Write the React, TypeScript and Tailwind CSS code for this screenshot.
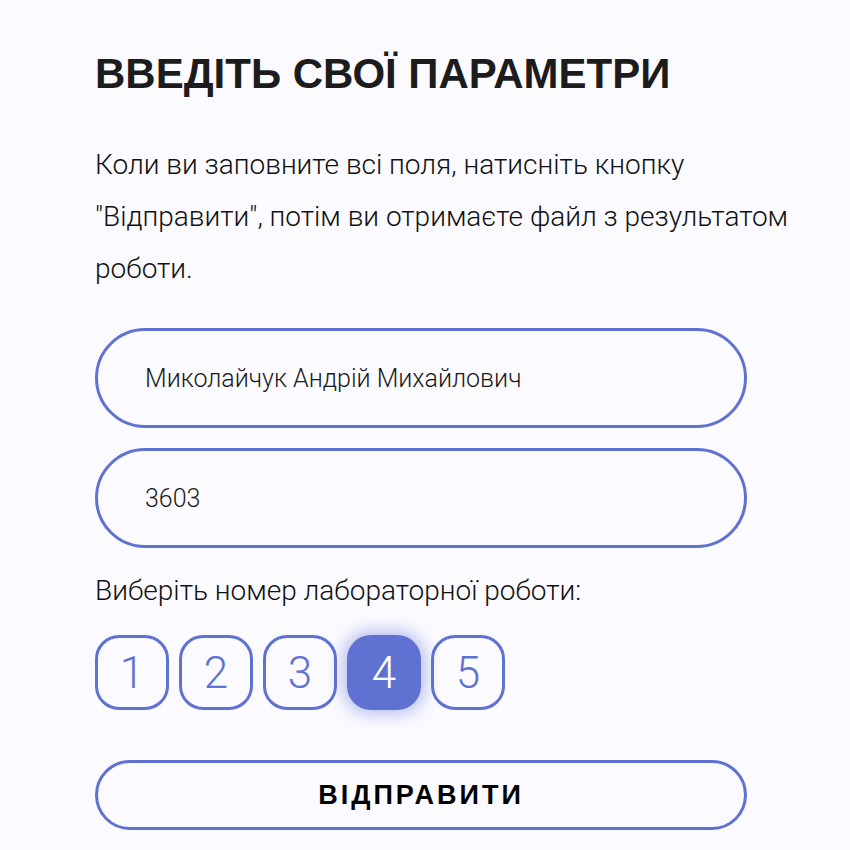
import { useState } from 'react';

export default function App() {
  const [selected, setSelected] = useState(4);
  const labs = [1, 2, 3, 4, 5];

  return (
    <div className="min-h-[850px] w-full bg-[#fafaff] font-['Roboto',sans-serif] text-[#1a1a1a]">
      <div className="pt-[50px] pl-[95px]">
        <h1 className="text-[42px] leading-[48px] font-bold text-[#1c1c1c] font-['Liberation_Sans',Arial,sans-serif]">
          ВВЕДІТЬ СВОЇ ПАРАМЕТРИ
        </h1>

        <p className="mt-[41px] w-[710px] text-[28px] font-light leading-[52px] text-[#111]">
          Коли ви заповните всі поля, натисніть кнопку "Відправити", потім ви отримаєте файл з результатом роботи.
        </p>

        <div className="w-[652px]">
          <div className="mt-[33px] flex flex-col gap-[20px]">
            <input
              defaultValue="Миколайчук Андрій Михайлович"
              className="h-[100px] w-full rounded-full border-[3px] border-[#5f72d2] bg-transparent pl-[47px] text-[25px] font-light text-[#1a1a1a] outline-none"
            />
            <input
              defaultValue="3603"
              className="h-[100px] w-full rounded-full border-[3px] border-[#5f72d2] bg-transparent pl-[47px] text-[25px] font-light text-[#1a1a1a] outline-none"
            />
          </div>

          <div className="mt-[28px] text-[28px] font-light leading-[30px] text-[#111]">
            Виберіть номер лабораторної роботи:
          </div>

          <div className="mt-[29px] flex gap-[10px]">
            {labs.map((n) =>
              n === selected ? (
                <button
                  key={n}
                  onClick={() => setSelected(n)}
                  className="flex h-[75px] w-[74px] items-center justify-center rounded-[24px] bg-[#5f72d2] text-[44px] font-light text-white shadow-[0_0_16px_4px_rgba(95,114,210,0.45)]"
                >
                  {n}
                </button>
              ) : (
                <button
                  key={n}
                  onClick={() => setSelected(n)}
                  className="flex h-[75px] w-[74px] items-center justify-center rounded-[24px] border-[3px] border-[#5f72d2] text-[44px] font-light text-[#5f72d2]"
                >
                  {n}
                </button>
              )
            )}
          </div>

          <button className="mt-[50px] flex h-[70px] w-full items-center justify-center rounded-full border-[3px] border-[#5f72d2] text-[27px] font-bold tracking-[3px] text-black font-['Liberation_Sans',Arial,sans-serif]">
            ВІДПРАВИТИ
          </button>
        </div>
      </div>
    </div>
  );
}
